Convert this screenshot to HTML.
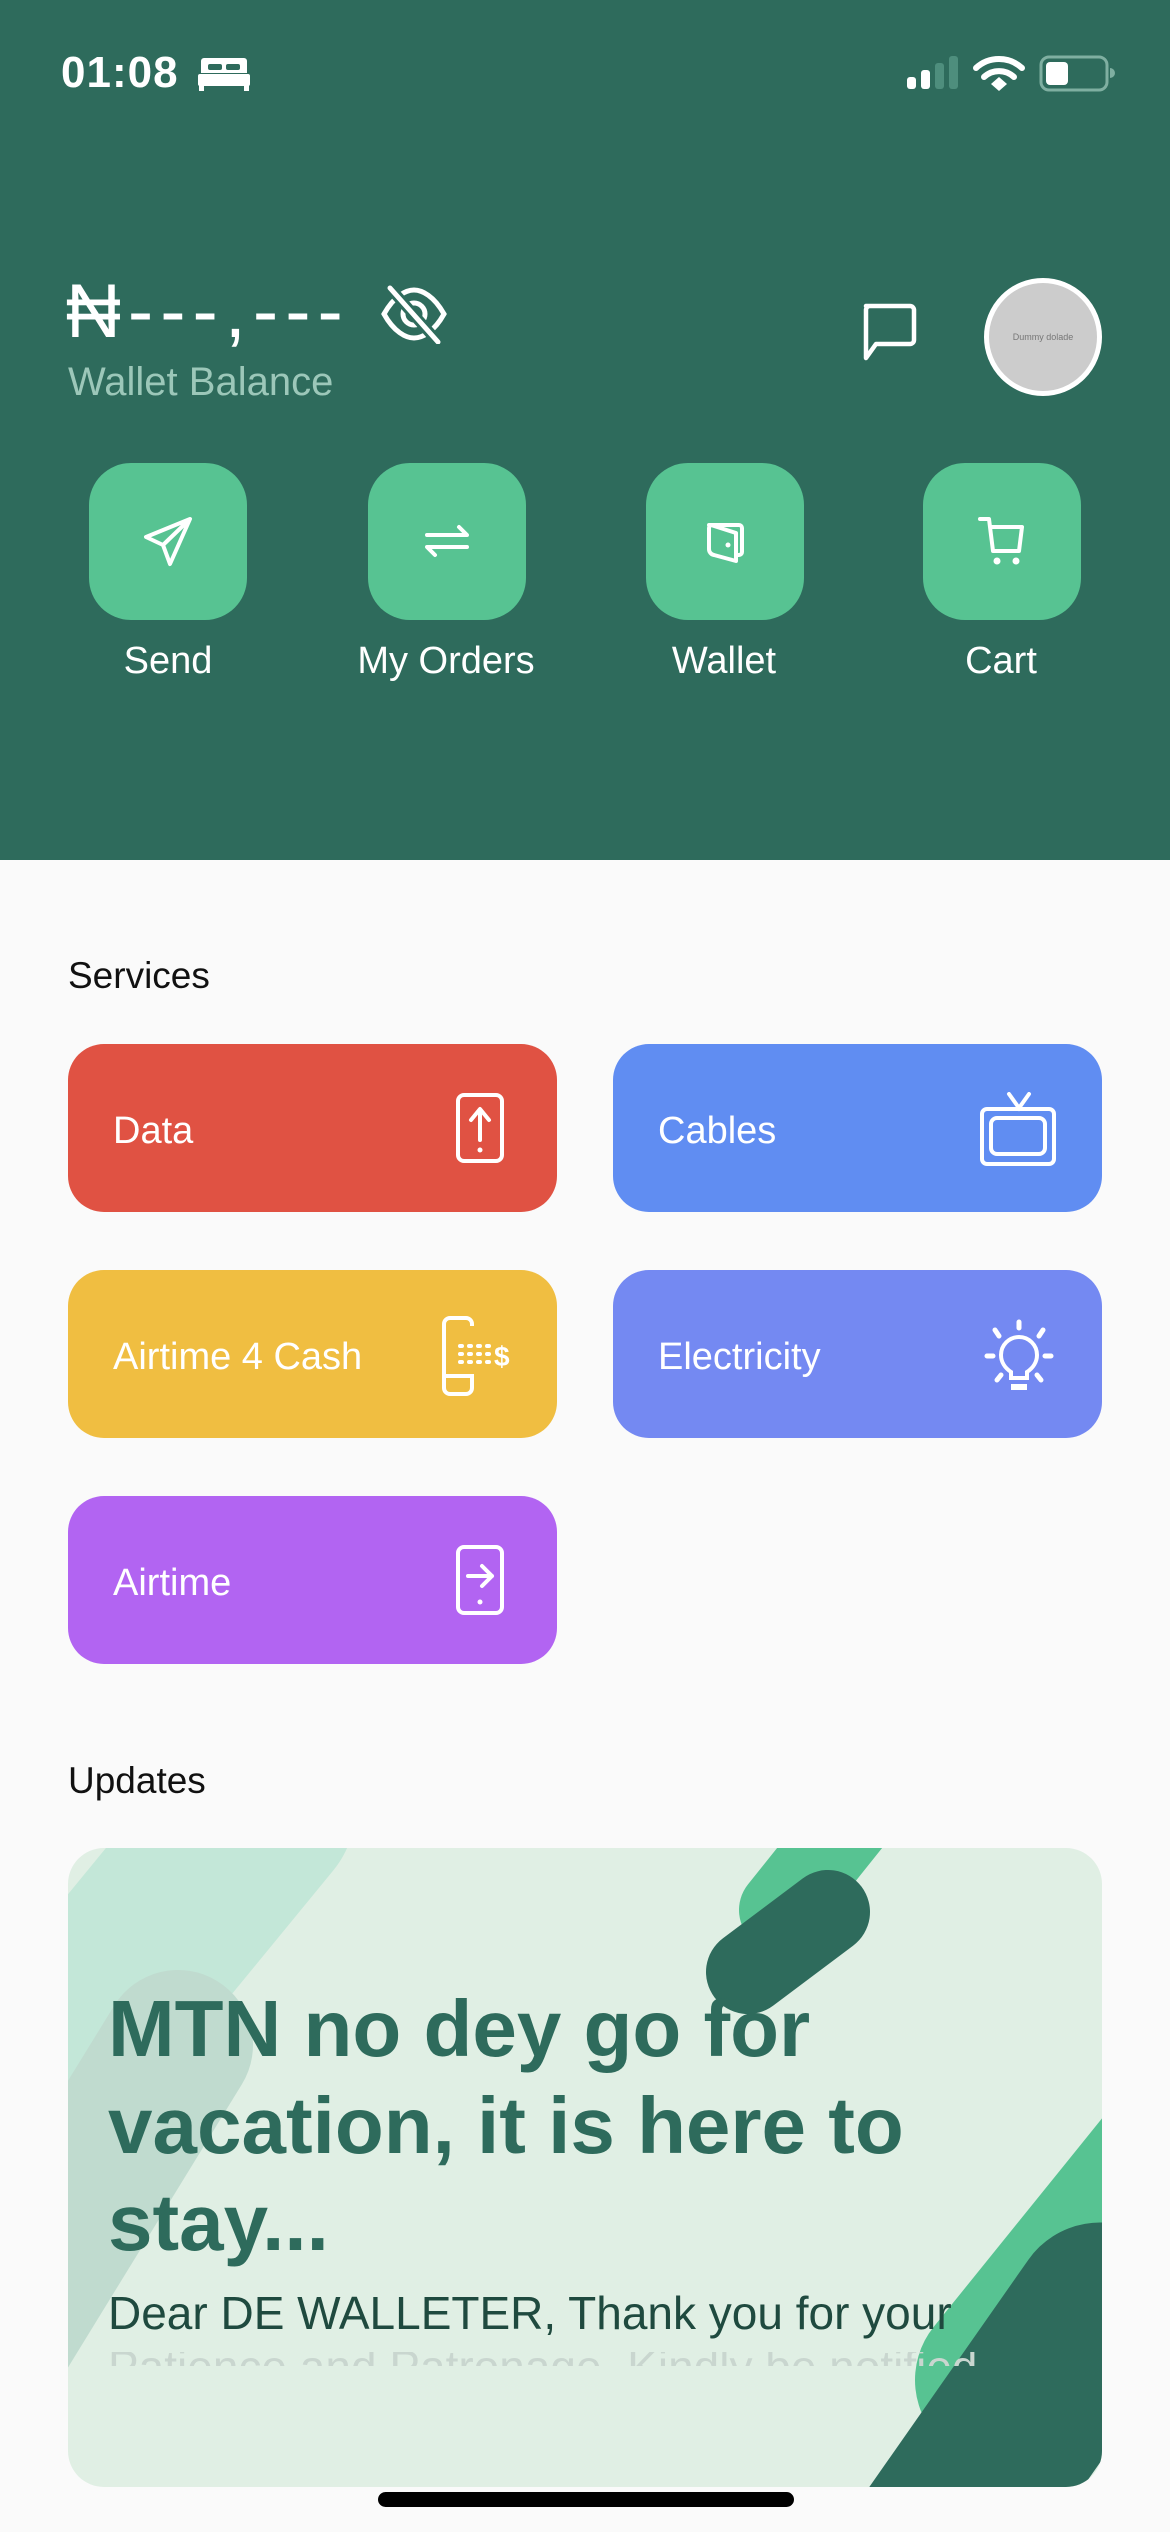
<!DOCTYPE html>
<html><head><meta charset="utf-8">
<style>
*{margin:0;padding:0;box-sizing:border-box}
html,body{width:1170px;height:2532px;overflow:hidden;background:#FAFAFA;font-family:"Liberation Sans",sans-serif}
.hdr{position:absolute;left:0;top:0;width:1170px;height:860px;background:#2E6B5C}
.abs{position:absolute}
.btn{position:absolute;top:463px;width:158px;height:157px;border-radius:42px;background:#57C392}
.blbl{position:absolute;top:640px;width:260px;text-align:center;color:#fff;font-size:38px}
.card{position:absolute;width:489px;height:168px;border-radius:36px;color:#fff;font-size:38px}
.card span{position:absolute;left:45px;top:66px}
.card svg{position:absolute;left:386px;top:48px}
.sec{position:absolute;left:68px;font-size:37px;color:#111}
</style></head><body>
<div class="hdr"></div>
<div class="abs" style="left:61px;top:48px;color:#fff;font-size:44px;font-weight:bold;letter-spacing:1px">01:08</div>
<svg class="abs" style="left:198px;top:56px" width="52" height="36" viewBox="0 0 52 36"><path d="M6 2h40a3 3 0 0 1 3 3v12H3V5a3 3 0 0 1 3-3z" fill="#fff"/><rect x="10" y="8" width="14" height="6" rx="2" fill="#2E6B5C"/><rect x="28" y="8" width="14" height="6" rx="2" fill="#2E6B5C"/><rect x="0" y="18" width="52" height="12" rx="2" fill="#fff"/><rect x="1" y="28" width="5" height="7" fill="#fff"/><rect x="46" y="28" width="5" height="7" fill="#fff"/></svg>
<svg class="abs" style="left:905px;top:55px" width="210" height="40" viewBox="0 0 210 40">
<rect x="2" y="22" width="9" height="12" rx="3" fill="#fff"/><rect x="16" y="15" width="9" height="19" rx="3" fill="#fff"/><rect x="30" y="8" width="9" height="26" rx="3" fill="#4E8E7D"/><rect x="44" y="1" width="9" height="33" rx="3" fill="#4E8E7D"/>
<path d="M71 13a34 34 0 0 1 46 0" stroke="#fff" stroke-width="6" fill="none" stroke-linecap="round"/><path d="M79 22a22 22 0 0 1 30 0" stroke="#fff" stroke-width="6" fill="none" stroke-linecap="round"/><path d="M86 29l8-7 8 7-8 7z" fill="#fff"/>
<rect x="136" y="2" width="66" height="33" rx="8" fill="none" stroke="#7FAFA1" stroke-width="3"/><rect x="141" y="7" width="22" height="23" rx="4" fill="#fff"/><path d="M205 13v10a4 4 0 0 0 0-10z" fill="#7FAFA1"/>
</svg>
<div class="abs" style="left:66px;top:268px;color:#fff;font-size:76px;letter-spacing:7px">₦---,---</div>
<svg class="abs" style="left:380px;top:284px" width="68" height="60" viewBox="0 0 68 60"><path d="M4 30C14 12 26 6 34 6s20 6 30 24C54 48 42 54 34 54S14 48 4 30z" fill="none" stroke="#fff" stroke-width="5"/><circle cx="34" cy="30" r="11" fill="none" stroke="#fff" stroke-width="5"/><path d="M10 4l48 54" stroke="#2E6B5C" stroke-width="11"/><path d="M10 4l48 54" stroke="#fff" stroke-width="5" stroke-linecap="round"/></svg>
<div class="abs" style="left:68px;top:360px;color:#9CC7B9;font-size:40px">Wallet Balance</div>
<svg class="abs" style="left:858px;top:302px" width="62" height="62" viewBox="0 0 62 62"><path d="M8 4h44a4 4 0 0 1 4 4v30a4 4 0 0 1-4 4H18L8 56V8a4 4 0 0 1 4-4z" fill="none" stroke="#fff" stroke-width="4.5" stroke-linejoin="round"/></svg>
<div class="abs" style="left:984px;top:278px;width:118px;height:118px;border-radius:50%;background:#CCCCCC;border:5px solid #fff;color:#777;font-size:9px;text-align:center;line-height:108px">Dummy dolade</div>
<div class="btn" style="left:89px"><svg style="position:absolute;left:51px;top:50px" width="56" height="56" viewBox="0 0 56 56"><path d="M50 6L6 24l17 8 7 19z M23 32L50 6" fill="none" stroke="#fff" stroke-width="4" stroke-linejoin="round"/></svg></div>
<div class="btn" style="left:368px"><svg style="position:absolute;left:51px;top:50px" width="56" height="56" viewBox="0 0 56 56"><path d="M8 22h40l-8-8M48 34H8l8 8" fill="none" stroke="#fff" stroke-width="4" stroke-linecap="round" stroke-linejoin="round"/></svg></div>
<div class="btn" style="left:646px"><svg style="position:absolute;left:51px;top:50px" width="56" height="56" viewBox="0 0 56 56"><path d="M12 12h30a3 3 0 0 1 3 3v24a3 3 0 0 1-3 3h-3v6l-22-6a6 6 0 0 1-5-6V15a3 3 0 0 1 3-3z M14 12l25 8v28" fill="none" stroke="#fff" stroke-width="4" stroke-linejoin="round"/><circle cx="31" cy="32" r="2.5" fill="#fff"/></svg></div>
<div class="btn" style="left:923px"><svg style="position:absolute;left:51px;top:50px" width="56" height="56" viewBox="0 0 56 56"><path d="M6 6h9l4 32h26l3-24H17" fill="none" stroke="#fff" stroke-width="4" stroke-linejoin="round" stroke-linecap="round"/><circle cx="23" cy="48" r="3.5" fill="#fff"/><circle cx="42" cy="48" r="3.5" fill="#fff"/></svg></div>
<div class="blbl" style="left:38px">Send</div>
<div class="blbl" style="left:316px">My Orders</div>
<div class="blbl" style="left:594px">Wallet</div>
<div class="blbl" style="left:871px">Cart</div>
<div class="sec" style="top:955px">Services</div>
<div class="card" style="left:68px;top:1044px;background:#E05243"><span>Data</span><svg width="52" height="72" viewBox="0 0 52 72"><rect x="4" y="3" width="44" height="66" rx="6" fill="none" stroke="#fff" stroke-width="4"/><path d="M26 48V18M17 28l9-11 9 11" fill="none" stroke="#fff" stroke-width="4" stroke-linecap="round" stroke-linejoin="round"/><circle cx="26" cy="58" r="2.5" fill="#fff"/></svg></div>
<div class="card" style="left:613px;top:1044px;background:#608DF2"><span>Cables</span><svg style="left:366px;top:48px" width="80" height="76" viewBox="0 0 80 76"><path d="M30 2l10 14 10-14" fill="none" stroke="#fff" stroke-width="4" stroke-linecap="round"/><rect x="3" y="17" width="72" height="55" rx="5" fill="none" stroke="#fff" stroke-width="4"/><rect x="12" y="26" width="54" height="36" rx="6" fill="none" stroke="#fff" stroke-width="4"/></svg></div>
<div class="card" style="left:68px;top:1270px;background:#F0BE41"><span>Airtime 4 Cash</span><svg style="left:372px;top:46px" width="76" height="80" viewBox="0 0 76 80"><path d="M32 10V8a6 6 0 0 0-6-6H10a6 6 0 0 0-6 6v64a6 6 0 0 0 6 6h16a6 6 0 0 0 6-6V58M4 60h28" fill="none" stroke="#fff" stroke-width="4"/><path d="M20 30h30M20 38h30M20 46h30" stroke="#fff" stroke-width="4" stroke-linecap="round" stroke-dasharray="2 7"/><text x="54" y="50" font-family="Liberation Sans" font-weight="bold" font-size="28" fill="#fff">$</text></svg></div>
<div class="card" style="left:613px;top:1270px;background:#7489F2"><span>Electricity</span><svg style="left:370px;top:48px" width="72" height="80" viewBox="0 0 72 80"><path d="M36 4v6M12 12l4 6M60 12l-4 6M4 38h6M62 38h6M14 62l4-5M58 62l-4-5" stroke="#fff" stroke-width="5" stroke-linecap="round"/><path d="M28 60v-6c-6-4-10-10-10-17a18 18 0 0 1 36 0c0 7-4 13-10 17v6z" fill="none" stroke="#fff" stroke-width="4"/><path d="M28 66h16v6H28z" fill="#fff"/></svg></div>
<div class="card" style="left:68px;top:1496px;background:#B264F2"><span>Airtime</span><svg width="52" height="72" viewBox="0 0 52 72"><rect x="4" y="3" width="44" height="66" rx="6" fill="none" stroke="#fff" stroke-width="4"/><path d="M14 32h24M28 22l10 10-10 10" fill="none" stroke="#fff" stroke-width="4" stroke-linecap="round" stroke-linejoin="round"/><circle cx="26" cy="58" r="2.5" fill="#fff"/></svg></div>
<div class="sec" style="top:1760px">Updates</div>
<div class="abs" style="left:68px;top:1848px;width:1034px;height:639px;border-radius:36px;overflow:hidden;background:#E0EFE4">
<svg class="abs" style="left:0;top:0" width="1034" height="639" viewBox="68 1848 1034 639">
<line x1="260" y1="1810" x2="-60" y2="2200" stroke="#C3E7D8" stroke-width="190" stroke-linecap="round"/>
<line x1="178" y1="2045" x2="-40" y2="2400" stroke="#C0DBCF" stroke-width="150" stroke-linecap="round"/>
<line x1="900" y1="1760" x2="780" y2="1910" stroke="#57C392" stroke-width="82" stroke-linecap="round"/>
<line x1="828" y1="1912" x2="748" y2="1972" stroke="#2E6B5C" stroke-width="84" stroke-linecap="round"/>
<line x1="1210" y1="2120" x2="1000" y2="2380" stroke="#57C392" stroke-width="170" stroke-linecap="round"/>
<line x1="1100" y1="2310" x2="820" y2="2710" stroke="#2E6B5C" stroke-width="175" stroke-linecap="round"/>
</svg>
<div class="abs" style="left:40px;top:132px;width:1000px;color:#2E6B5C;font-size:80px;font-weight:bold;line-height:97px;white-space:nowrap;letter-spacing:0">MTN no dey go for<br>vacation, it is here to<br>stay...</div>
<div class="abs" style="left:40px;top:441px;width:980px;color:#1F4A3F;font-size:46px;line-height:48px;white-space:nowrap">Dear DE WALLETER, Thank you for your</div>
<div class="abs" style="left:40px;top:504px;width:980px;height:14px;overflow:hidden;color:#C9D6CF;font-size:46px;line-height:48px;white-space:nowrap"><div style="margin-top:-9px">Patience and Patronage. Kindly be notified</div></div>
</div>
<div class="abs" style="left:378px;top:2492px;width:416px;height:15px;border-radius:8px;background:#000"></div>
</body></html>
